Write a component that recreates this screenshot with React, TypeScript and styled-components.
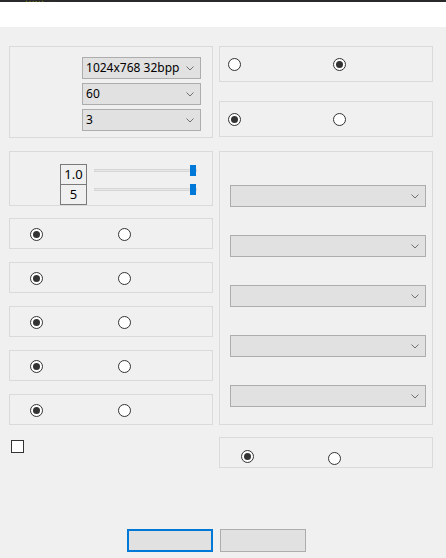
import styled, { createGlobalStyle } from "styled-components";

const GlobalStyle = createGlobalStyle`
  html, body {
    margin: 0;
    padding: 0;
    background: #f0f0f0;
  }
  body {
    font-family: "Noto Sans", "Liberation Sans", sans-serif;
    font-size: 12px;
    color: #000;
  }
`;

interface RadioProps {
  checked?: boolean;
  shift?: number;
}

function Radio({ checked, shift = 0 }: RadioProps) {
  return <RadioCircle $shift={shift}>{checked && <RadioDot />}</RadioCircle>;
}

function Chevron() {
  return (
    <svg width="8" height="5" viewBox="0 0 8 5">
      <path d="M0.5 0.5 L4 4 L7.5 0.5" fill="none" stroke="#707070" strokeWidth="1" />
    </svg>
  );
}

interface DropDownProps {
  value?: string;
  wide?: boolean;
}

function DropDown({ value, wide }: DropDownProps) {
  return (
    <SelectBox $wide={wide}>
      <SelectValue>{value}</SelectValue>
      <Chevron />
    </SelectBox>
  );
}

function Slider() {
  return (
    <SliderWrap>
      <Track />
      <Thumb />
    </SliderWrap>
  );
}

const leftRows = [0, 1, 2, 3, 4];
const rightSelects = [0, 1, 2, 3, 4];

export default function App() {
  return (
    <>
      <GlobalStyle />
      <TopBar>
        <BarText>Launch ..</BarText>
      </TopBar>
      <TitleArea />
      <Panel>
        <Columns>
          <LeftColumn>
            <DisplayGroup>
              <DropDown value="1024x768 32bpp" />
              <DropDown value="60" />
              <DropDown value="3" />
            </DisplayGroup>
            <SliderGroup>
              <ValueStack>
                <ValueCell>1.0</ValueCell>
                <ValueCell>5</ValueCell>
              </ValueStack>
              <SliderStack>
                <Slider />
                <Slider />
              </SliderStack>
            </SliderGroup>
            {leftRows.map(i => (
              <OptionRow key={i}>
                <Radio checked />
                <Radio />
              </OptionRow>
            ))}
            <CheckBox />
          </LeftColumn>
          <RightColumn>
            <TopOption>
              <Radio />
              <Radio checked />
            </TopOption>
            <TopOption $gap={19}>
              <Radio checked />
              <Radio />
            </TopOption>
            <SelectGroup>
              {rightSelects.map(i => (
                <DropDown key={i} wide />
              ))}
            </SelectGroup>
            <BottomOption>
              <Radio checked />
              <Radio shift={2} />
            </BottomOption>
          </RightColumn>
        </Columns>
        <Footer>
          <Button $primary />
          <Button />
        </Footer>
      </Panel>
    </>
  );
}

const TopBar = styled.div`
  height: 2px;
  background: #29292c;
  overflow: hidden;
  padding-left: 26px;
`;

const BarText = styled.span`
  display: block;
  font-family: "DejaVu Sans Mono", monospace;
  font-size: 2px;
  line-height: 2px;
  letter-spacing: 2px;
  color: #d8e800;
`;

const TitleArea = styled.div`
  height: 25px;
  background: #ffffff;
`;

const Panel = styled.div`
  height: 531px;
  box-sizing: border-box;
  background: #f0f0f0;
  padding: 19px 13px 0 9px;
`;

const Columns = styled.div`
  display: flex;
  gap: 6px;
  align-items: flex-start;
`;

const LeftColumn = styled.div`
  width: 205px;
  display: flex;
  flex-direction: column;
`;

const RightColumn = styled.div`
  width: 215px;
  display: flex;
  flex-direction: column;
`;

const GroupBox = styled.div`
  box-sizing: border-box;
  border: 1px solid #dadada;
`;

const DisplayGroup = styled(GroupBox)`
  height: 92px;
  display: flex;
  flex-direction: column;
  align-items: flex-end;
  gap: 4px;
  padding: 10px 11px 0 0;
`;

const SelectBox = styled.div<{ $wide?: boolean }>`
  box-sizing: border-box;
  width: ${p => (p.$wide ? "196px" : "119px")};
  height: 22px;
  border: 1px solid #adadad;
  background: #e1e1e1;
  display: flex;
  align-items: center;
  justify-content: space-between;
  padding: 0 6px 0 3px;
  flex-shrink: 0;
`;

const SelectValue = styled.span`
  font-size: 12px;
  line-height: 20px;
  white-space: nowrap;
`;

const SliderGroup = styled(GroupBox)`
  height: 55px;
  margin-top: 13px;
  display: flex;
  align-items: flex-start;
  padding: 12px 0 0 50px;
  gap: 7px;
`;

const ValueStack = styled.div`
  display: flex;
  flex-direction: column;
  border: 1px solid #7a7a7a;
  width: 25px;
`;

const ValueCell = styled.div`
  height: 19px;
  font-size: 13px;
  line-height: 19px;
  text-align: center;
  background: #f0f0f0;

  & + & {
    border-top: 1px solid #7a7a7a;
  }
`;

const SliderStack = styled.div`
  display: flex;
  flex-direction: column;
  gap: 8px;
  padding-top: 1px;
`;

const SliderWrap = styled.div`
  position: relative;
  width: 103px;
  height: 11px;
  display: flex;
  align-items: center;
`;

const Track = styled.div`
  width: 100%;
  height: 3px;
  box-sizing: border-box;
  background: #e7e7e7;
  border: 1px solid #d6d6d6;
`;

const Thumb = styled.div`
  position: absolute;
  right: 1px;
  top: 0;
  width: 6px;
  height: 11px;
  background: #0078d7;
`;

const OptionRow = styled(GroupBox)`
  height: 31px;
  margin-top: 13px;
  display: flex;
  align-items: center;
  padding: 2px 0 0 20px;
  gap: 75px;

  &:nth-of-type(3) {
    margin-top: 12px;
  }
`;

const RadioCircle = styled.div<{ $shift: number }>`
  box-sizing: border-box;
  width: 13px;
  height: 13px;
  border-radius: 50%;
  border: 1px solid #333333;
  background: #ffffff;
  display: flex;
  align-items: center;
  justify-content: center;
  margin-top: ${p => p.$shift}px;
  flex-shrink: 0;
`;

const RadioDot = styled.div`
  width: 7px;
  height: 7px;
  border-radius: 50%;
  background: #333333;
`;

const CheckBox = styled.div`
  box-sizing: border-box;
  width: 13px;
  height: 13px;
  border: 1px solid #333333;
  background: #ffffff;
  margin: 15px 0 0 2px;
`;

const TopOption = styled(GroupBox)<{ $gap?: number }>`
  height: 36px;
  margin-top: ${p => p.$gap ?? 0}px;
  display: flex;
  align-items: center;
  padding-left: 8px;
  gap: 92px;
`;

const SelectGroup = styled(GroupBox)`
  height: 274px;
  margin-top: 14px;
  display: flex;
  flex-direction: column;
  gap: 28px;
  padding: 33px 0 0 10px;
`;

const BottomOption = styled(GroupBox)`
  height: 31px;
  margin-top: 12px;
  display: flex;
  align-items: flex-start;
  padding: 12px 0 0 21px;
  gap: 74px;
`;

const Footer = styled.div`
  display: flex;
  gap: 7px;
  margin-top: 61px;
  padding-left: 118px;
`;

const Button = styled.div<{ $primary?: boolean }>`
  box-sizing: border-box;
  width: 86px;
  height: 23px;
  background: #e1e1e1;
  border: ${p => (p.$primary ? "2px solid #0078d7" : "1px solid #adadad")};
`;
